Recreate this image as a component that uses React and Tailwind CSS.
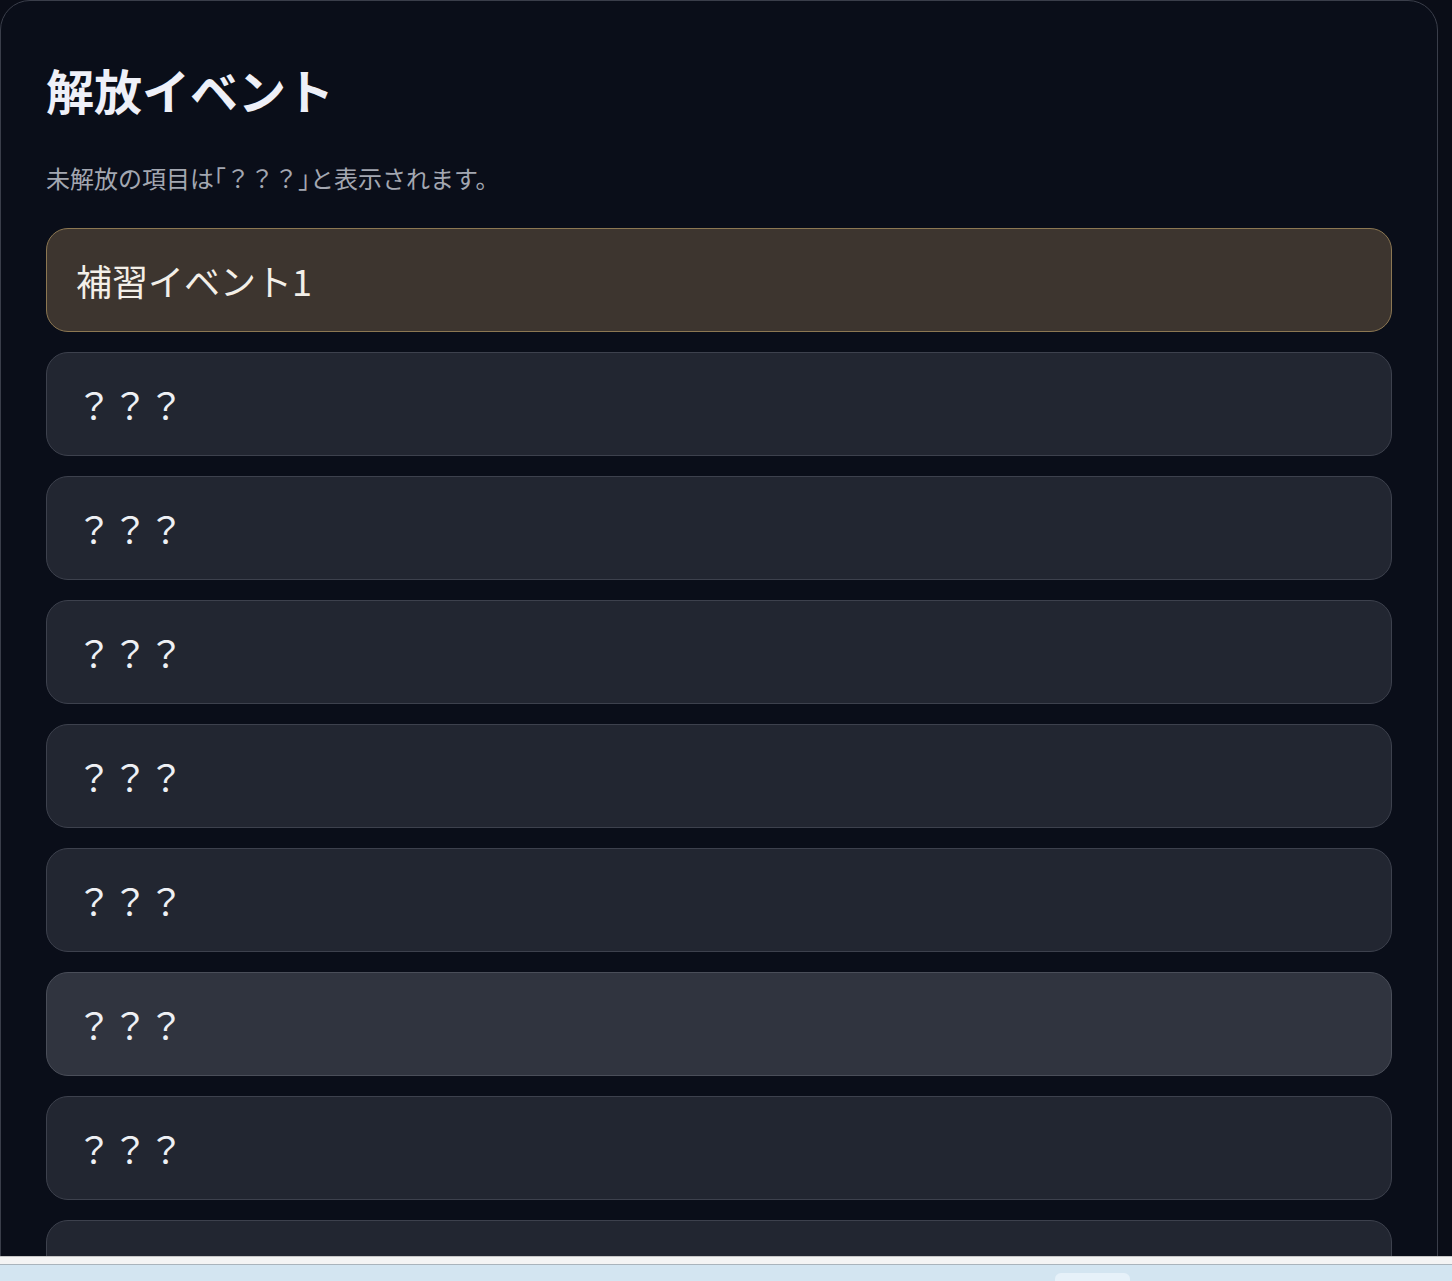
import { useState } from 'react'

const events = [
  { id: 1, label: '補習イベント1', unlocked: true },
  { id: 2, label: '？？？' },
  { id: 3, label: '？？？' },
  { id: 4, label: '？？？' },
  { id: 5, label: '？？？' },
  { id: 6, label: '？？？' },
  { id: 7, label: '？？？' },
  { id: 8, label: '？？？' },
  { id: 9, label: '？？？' },
  { id: 10, label: '？？？' }
]

function EventRow({ event, hovered, onHover }) {
  const base = 'flex h-[104px] shrink-0 items-center rounded-[22px] border pl-[29px] text-[36px] leading-none'
  let tone = 'border-[#3d414d] bg-[#222631] text-[#eef0f4]'
  if (event.unlocked) tone = 'border-[#8c7752] bg-[#3d352f] text-[#f3efe8]'
  else if (hovered) tone = 'border-[#4a4e59] bg-[#30343f] text-[#eef0f4]'

  return (
    <div
      className={`${base} ${tone}`}
      onMouseEnter={() => onHover(event.id)}
      onMouseLeave={() => onHover(null)}
    >
      {event.label}
    </div>
  )
}

export default function App() {
  // 7th row shows the hover state in the screenshot
  const [hoverId, setHoverId] = useState(7)

  return (
    <div
      className="flex h-screen flex-col bg-[#0a0d17]"
      style={{ fontFamily: '"Noto Sans CJK JP", "Noto Sans", sans-serif' }}
    >
      <div className="flex-1 overflow-hidden pr-[14px]">
        <section className="rounded-[30px] border border-[#3a3e4a] bg-[#0a0e19] px-[45px] pt-[64px] pb-10">
          <h1 className="text-5xl font-bold leading-none text-[#eef0f8]">解放イベント</h1>
          <p className="mt-[48px] text-[24px] leading-[33px] text-[#a3a7b1]">
            未解放の項目は
            <span className="[font-feature-settings:'halt']">「</span>
            ？？？
            <span className="[font-feature-settings:'halt']">」</span>
            と表示されます。
          </p>

          <div className="mt-[34px] flex flex-col gap-5">
            {events.map((event) => (
              <EventRow
                key={event.id}
                event={event}
                hovered={hoverId === event.id}
                onHover={setHoverId}
              />
            ))}
          </div>
        </section>
      </div>

      {/* browser chrome strip at the bottom of the capture */}
      <div className="h-[25px] shrink-0">
        <div className="h-px bg-[#c6c6c6]" />
        <div className="h-[7px] bg-[#f4f4f4]" />
        <div className="h-px bg-[#aab4bc]" />
        <div className="flex h-4 bg-[#d3e5f1] pl-[1055px] pt-2">
          <div className="h-2 w-[75px] rounded-t-md bg-[#e6f1f9]" />
        </div>
      </div>
    </div>
  )
}
